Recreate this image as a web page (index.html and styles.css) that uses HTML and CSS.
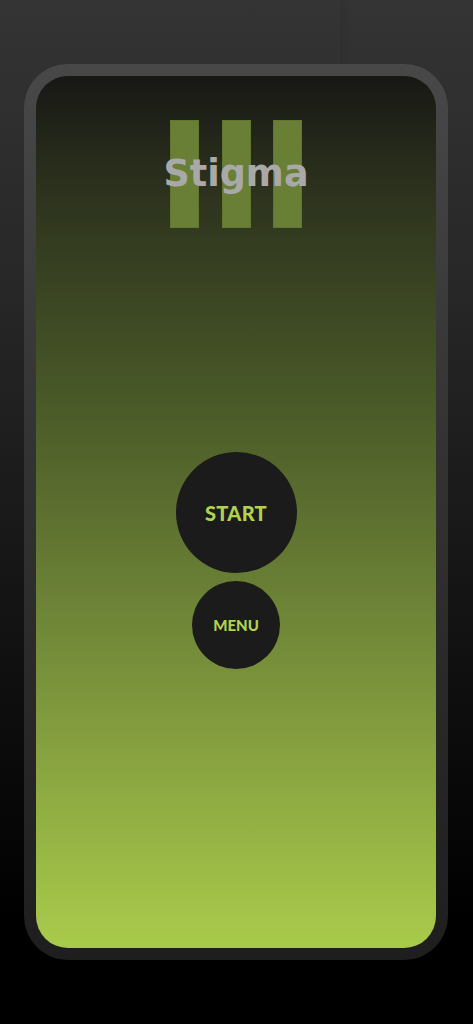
FILE: index.html
```html
<!DOCTYPE html>
<html>
<head>
<meta charset="utf-8">
<link rel="stylesheet" href="styles.css">
</head>
<body>
<div class="shade"></div>
<div class="frame">
  <div class="screen">
    <div class="logo">
      <div class="bars">
        <div class="bar"></div>
        <div class="bar"></div>
        <div class="bar"></div>
      </div>
      <div class="title">Stigma</div>
    </div>
    <div class="buttons">
      <div class="btn start">START</div>
      <div class="btn menu">MENU</div>
    </div>
  </div>
</div>
</body>
</html>
```

FILE: styles.css
```css
html, body {
  margin: 0;
  padding: 0;
}
body {
  width: 473px;
  height: 1024px;
  background: linear-gradient(180deg, #343434 0%, #262626 30%, #101010 65%, #000 90%, #000 100%);
  overflow: hidden;
  position: relative;
  font-family: "Lato", "DejaVu Sans", sans-serif;
}
.shade {
  position: absolute;
  left: 340px;
  top: 0;
  width: 14px;
  height: 76px;
  background: linear-gradient(90deg, rgba(0,0,0,0.06), rgba(0,0,0,0));
}
.frame {
  position: relative;
  margin: 64px 0 0 24px;
  width: 400px;
  height: 872px;
  padding: 12px;
  border-radius: 44px;
  background: linear-gradient(180deg, #484848 0%, #343434 40%, #1e1e1e 100%);
}
.screen {
  width: 400px;
  height: 872px;
  border-radius: 32px;
  background: linear-gradient(180deg, #171814 0%, #2b301d 12%, #4a5a28 38%, #6f8537 62%, #a9cb4b 100%);
  display: flex;
  flex-direction: column;
  align-items: center;
  overflow: hidden;
}
.logo {
  position: relative;
  margin-top: 44px;
  width: 132px;
  height: 108px;
}
.bars {
  display: flex;
  justify-content: space-between;
  height: 100%;
}
.bar {
  width: 29px;
  height: 108px;
  background: #6a7f36;
  box-shadow: inset 0 0 0 1px #62762f;
}
.title {
  position: absolute;
  left: -30px;
  right: -30px;
  top: 32px;
  text-align: center;
  font-family: "DejaVu Sans", sans-serif;
  font-size: 36.5px;
  font-weight: 700;
  color: #a9a9a9;
}
.buttons {
  margin-top: 224px;
  display: flex;
  flex-direction: column;
  align-items: center;
  gap: 8px;
}
.btn {
  border-radius: 50%;
  background: #1b1b1b;
  color: #b1d34b;
  font-weight: 900;
  display: flex;
  align-items: center;
  justify-content: center;
}
.start {
  width: 121px;
  height: 121px;
  font-size: 20px;
  letter-spacing: 0.3px;
}
.menu {
  width: 88px;
  height: 88px;
  font-size: 15px;
}
```
